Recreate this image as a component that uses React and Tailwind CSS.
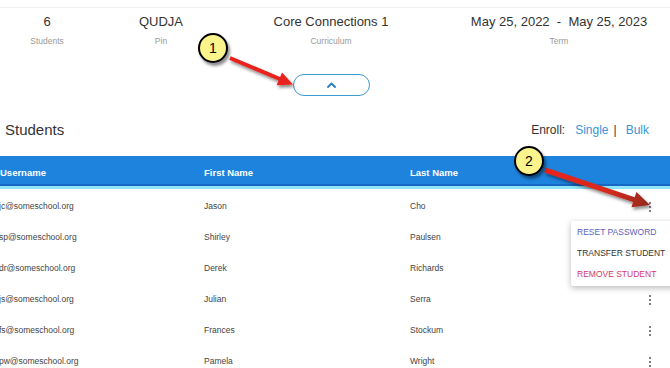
import { useState } from "react";

const stats = [
  { value: "6", label: "Students" },
  { value: "QUDJA", label: "Pin" },
  { value: "Core Connections 1", label: "Curriculum" },
  { value: "May 25, 2022  -  May 25, 2023", label: "Term" },
];

const students = [
  { user: "jc@someschool.org", first: "Jason", last: "Cho" },
  { user: "sp@someschool.org", first: "Shirley", last: "Paulsen" },
  { user: "dr@someschool.org", first: "Derek", last: "Richards" },
  { user: "js@someschool.org", first: "Julian", last: "Serra" },
  { user: "fs@someschool.org", first: "Frances", last: "Stockum" },
  { user: "pw@someschool.org", first: "Pamela", last: "Wright" },
];

function Kebab() {
  return (
    <div className="flex flex-col items-center gap-[2px]">
      <span className="w-[2px] h-[2px] rounded-full bg-[#555]" />
      <span className="w-[2px] h-[2px] rounded-full bg-[#555]" />
      <span className="w-[2px] h-[2px] rounded-full bg-[#555]" />
    </div>
  );
}

function Callout({ n, className }) {
  return (
    <div
      className={`absolute w-[30px] h-[30px] rounded-full bg-[#fbf38c] border-2 border-black flex items-center justify-center text-[14px] text-black shadow-[2px_3px_3px_rgba(0,0,0,0.45)] ${className}`}
    >
      {n}
    </div>
  );
}

export default function App() {
  const [open, setOpen] = useState(true);

  return (
    <div className="relative w-[670px] h-[368px] overflow-hidden bg-white font-['Liberation_Sans',Arial,sans-serif]">
      <div className="h-[8px] border-b border-[#efefef]" />

      {/* Summary */}
      <div className="grid grid-cols-[94px_134px_206px_250px] pt-[6px] text-center">
        {stats.map((s) => (
          <div key={s.label} className="flex flex-col items-center">
            <p className="text-[13px] leading-[16px] text-[#333] whitespace-pre">{s.value}</p>
            <p className="mt-[6px] text-[8.5px] leading-[11px] text-[#9a9a9a]">{s.label}</p>
          </div>
        ))}
      </div>

      <div className="mt-[27px] pl-[293px]">
        <button className="w-[77px] h-[22px] rounded-full border border-[#3c9ad4] flex items-center justify-center">
          <svg width="9" height="6" viewBox="0 0 9 6" fill="none">
            <path d="M1 5 L4.5 1.5 L8 5" stroke="#2a7fc0" strokeWidth="1.8" strokeLinecap="round" strokeLinejoin="round" />
          </svg>
        </button>
      </div>

      {/* Heading */}
      <div className="mt-[25px] flex items-center justify-between pl-[5px] pr-[21px] h-[18px]">
        <h2 className="text-[15px] text-[#333]">Students</h2>
        <div className="flex items-center text-[12px]">
          <span className="text-[#333]">Enroll:</span>
          <span className="ml-[10px] text-[#3a94d6]">Single</span>
          <span className="ml-[5px] text-[#333]">|</span>
          <span className="ml-[9px] text-[#3a94d6]">Bulk</span>
        </div>
      </div>

      {/* Table */}
      <div className="mt-[17px]">
        <div className="bg-[#1d83dc]">
          <div className="grid grid-cols-[204px_206px_1fr_22px] items-start h-[28px] pt-[11px] text-white text-[9.5px] leading-[12px] font-bold">
            <span>Username</span>
            <span>First Name</span>
            <span>Last Name</span>
            <span />
          </div>
          <div className="h-[2px] bg-[#1767c4]" />
          <div className="h-[3px] bg-[#8ee6f6]" />
        </div>
        <div className="pt-[2px]">
          {students.map((s) => (
            <div key={s.user} className="grid grid-cols-[204px_206px_1fr_22px] items-center h-[31px] text-[8.5px] text-[#444]">
              <span className="-ml-[1px]">{s.user}</span>
              <span>{s.first}</span>
              <span>{s.last}</span>
              <span className="flex justify-start pl-[1px]"><Kebab /></span>
            </div>
          ))}
        </div>
      </div>

      {/* Row menu */}
      {open && (
        <div className="absolute left-[571px] top-[221px] w-[110px] h-[65px] bg-white rounded-[2px] shadow-[0_2px_6px_rgba(0,0,0,0.28)] flex flex-col justify-center gap-[10px] pl-[6px] text-[8.5px] leading-[11px]">
          <button onClick={() => setOpen(false)} className="text-left text-[#5b62b8]">RESET PASSWORD</button>
          <button className="text-left text-[#333]">TRANSFER STUDENT</button>
          <button className="text-left text-[#d2386e]">REMOVE STUDENT</button>
        </div>
      )}

      {/* Annotations */}
      <svg className="absolute inset-0 pointer-events-none" width="670" height="368">
        <defs>
          <filter id="sh" x="-20%" y="-50%" width="140%" height="200%">
            <feDropShadow dx="1.5" dy="2.5" stdDeviation="1.5" floodColor="#000" floodOpacity="0.45" />
          </filter>
          <linearGradient id="g2" x1="545" y1="170" x2="650" y2="205" gradientUnits="userSpaceOnUse">
            <stop offset="0" stopColor="#e8231d" />
            <stop offset="0.6" stopColor="#d82a1e" />
            <stop offset="1" stopColor="#93291a" />
          </linearGradient>
        </defs>
        <polygon
          filter="url(#sh)"
          fill="#e8231d"
          points="230.8,56.2 280.1,77.0 282.0,72.4 293,84.5 276.6,85.2 278.5,80.6 229.2,59.8"
        />
        <polygon
          filter="url(#sh)"
          fill="url(#g2)"
          points="545.8,167.6 634.7,197.2 636.4,192.0 650,205 631.4,207.2 633.1,202.0 544.2,172.4"
        />
      </svg>
      <Callout n="1" className="left-[198px] top-[33px]" />
      <Callout n="2" className="left-[514px] top-[146px]" />
    </div>
  );
}
